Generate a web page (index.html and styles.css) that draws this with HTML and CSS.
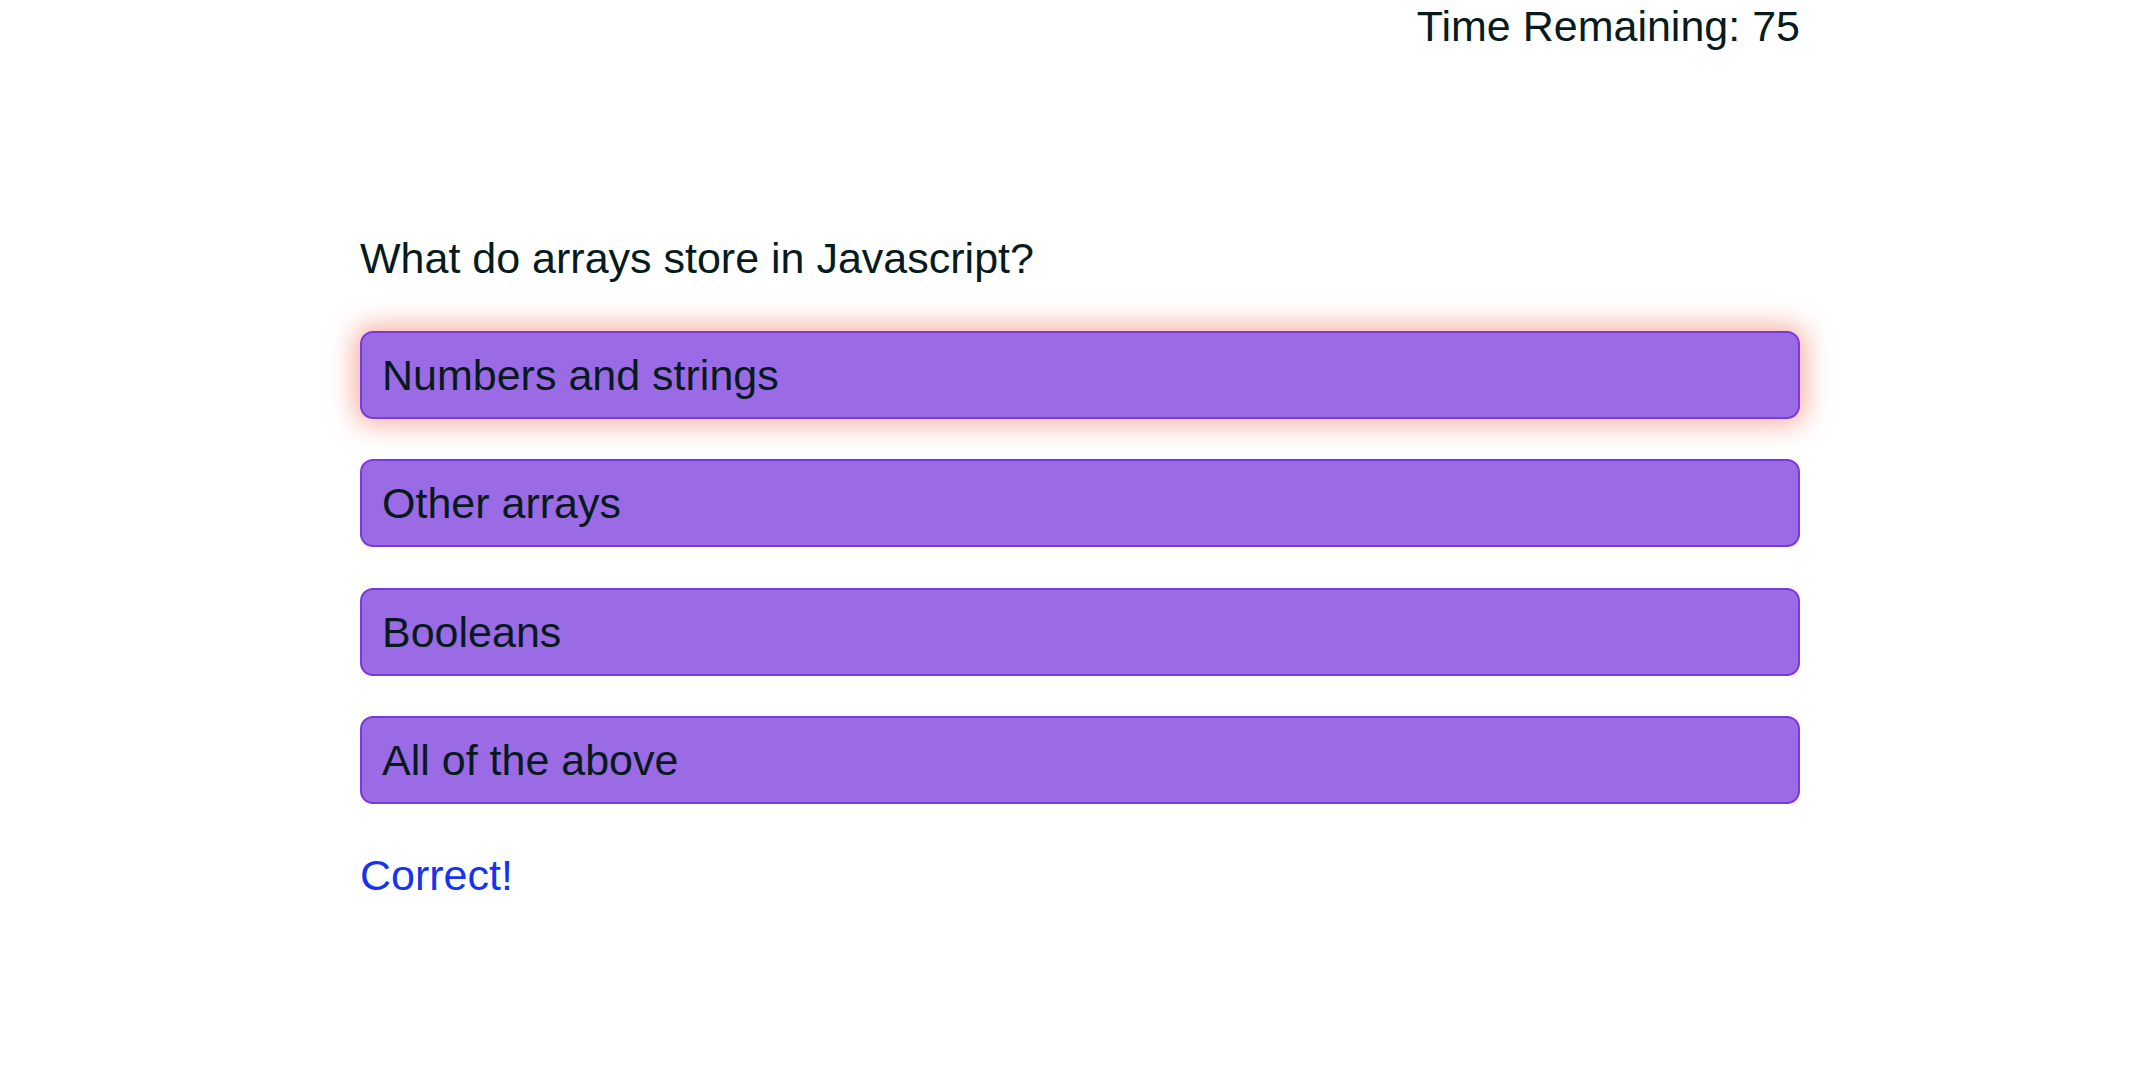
FILE: index.html
```html
<!DOCTYPE html>
<html lang="en">
<head>
<meta charset="utf-8">
<title>Quiz</title>
<link rel="stylesheet" href="styles.css">
</head>
<body>
<div class="page">
  <header class="topbar">
    <div class="timer">Time Remaining: <span class="time-value">75</span></div>
  </header>
  <main class="quiz">
    <h2 class="question">What do arrays store in Javascript?</h2>
    <div class="choices">
      <button class="choice choice-selected">Numbers and strings</button>
      <button class="choice">Other arrays</button>
      <button class="choice">Booleans</button>
      <button class="choice">All of the above</button>
    </div>
    <p class="feedback">Correct!</p>
  </main>
</div>
</body>
</html>
```

FILE: styles.css
```css
html, body {
  margin: 0;
  padding: 0;
  background: #ffffff;
}

body {
  font-family: "Liberation Sans", Arial, Helvetica, sans-serif;
  color: #071b1d;
}

.page {
  width: 1440px;
  margin-left: 360px;
}

.topbar {
  display: flex;
  justify-content: flex-end;
  padding-top: 2px;
}

.timer {
  font-size: 43px;
  line-height: 48px;
}

.quiz {
  display: flex;
  flex-direction: column;
  margin-top: 184px;
}

.question {
  margin: 0;
  font-size: 43px;
  line-height: 48px;
  font-weight: normal;
}

.choices {
  display: flex;
  flex-direction: column;
  gap: 40.5px;
  margin-top: 48.5px;
}

.choice {
  display: block;
  width: 100%;
  box-sizing: border-box;
  margin: 0;
  padding: 18px 20px;
  border: 2px solid #7b38dc;
  border-radius: 13px;
  background: #9b6be6;
  color: #071b1d;
  font-family: "Liberation Sans", Arial, Helvetica, sans-serif;
  font-size: 43px;
  line-height: 48px;
  text-align: left;
  cursor: pointer;
}

.choice-selected {
  box-shadow: 0 0 26px 6px rgba(238, 115, 90, 0.55);
}

.feedback {
  margin: 47px 0 0 0;
  font-size: 43px;
  line-height: 48px;
  color: #1633f2;
}
```
